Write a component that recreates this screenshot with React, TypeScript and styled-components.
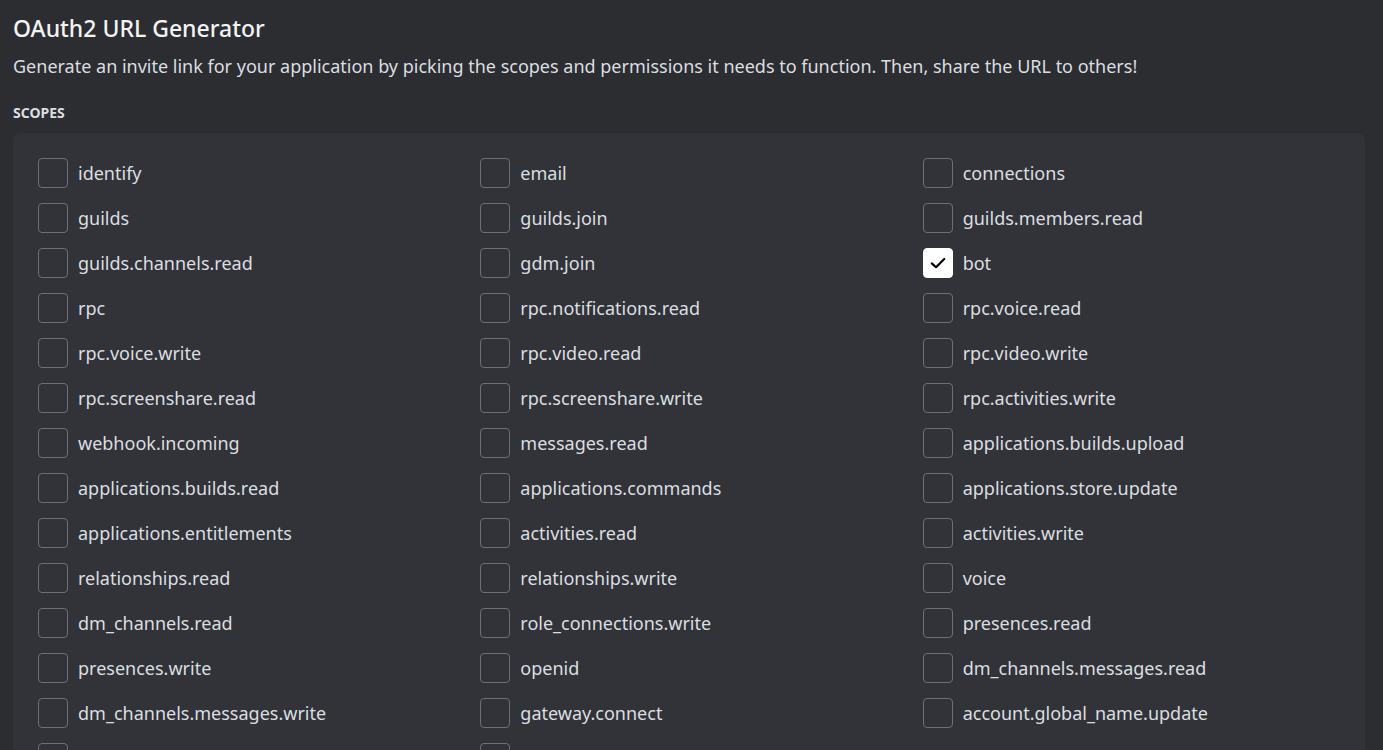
import React from "react";
import styled, { createGlobalStyle } from "styled-components";

const Global = createGlobalStyle`
  html, body { margin: 0; padding: 0; background: #2b2d31; }
  body { font-family: "Noto Sans", "Open Sans", sans-serif; overflow: hidden; }
`;

const Page = styled.div`
  padding: 13px 18px 0 13px;
  height: 750px;
  box-sizing: border-box;
  overflow: hidden;
`;

const Title = styled.h1`
  margin: 0;
  font-size: 23px;
  line-height: 30px;
  font-weight: 500;
  color: #f2f3f5;
`;

const Description = styled.p`
  margin: 10px 0 0;
  font-size: 18px;
  line-height: 26px;
  color: #dbdee1;
`;

const SectionLabel = styled.h2`
  margin: 25px 0 0;
  font-size: 14px;
  line-height: 18px;
  font-weight: 700;
  text-transform: uppercase;
  color: #dbdee1;
`;

const Panel = styled.div`
  margin-top: 11px;
  background: #313338;
  border-radius: 8px;
  padding: 25px 0 25px 25px;
  display: grid;
  grid-template-columns: repeat(3, 1fr);
  row-gap: 15px;
`;

const Item = styled.label`
  display: flex;
  align-items: center;
  gap: 10px;
  height: 30px;
`;

const Box = styled.span<{ $checked?: boolean }>`
  width: 30px;
  height: 30px;
  box-sizing: border-box;
  flex: none;
  border-radius: 4px;
  border: 1px solid ${(p) => (p.$checked ? "#ffffff" : "#6d6f78")};
  background: ${(p) => (p.$checked ? "#ffffff" : "transparent")};
  display: flex;
  align-items: center;
  justify-content: center;
`;

const Label = styled.span`
  font-size: 18px;
  color: #dbdee1;
  white-space: nowrap;
`;

const scopes = [
  "identify", "email", "connections",
  "guilds", "guilds.join", "guilds.members.read",
  "guilds.channels.read", "gdm.join", "bot",
  "rpc", "rpc.notifications.read", "rpc.voice.read",
  "rpc.voice.write", "rpc.video.read", "rpc.video.write",
  "rpc.screenshare.read", "rpc.screenshare.write", "rpc.activities.write",
  "webhook.incoming", "messages.read", "applications.builds.upload",
  "applications.builds.read", "applications.commands", "applications.store.update",
  "applications.entitlements", "activities.read", "activities.write",
  "relationships.read", "relationships.write", "voice",
  "dm_channels.read", "role_connections.write", "presences.read",
  "presences.write", "openid", "dm_channels.messages.read",
  "dm_channels.messages.write", "gateway.connect", "account.global_name.update",
  "payment_sources.country_code", "sdk.social_layer",
];

const Check = () => (
  <svg width="16" height="12" viewBox="0 0 16 12" fill="none">
    <path d="M1.8 6.4l4.2 3.8L14.2 2" stroke="#000" strokeWidth="2.2" strokeLinecap="round" strokeLinejoin="round" />
  </svg>
);

export default function App() {
  return (
    <>
      <Global />
      <Page>
        <Title>OAuth2 URL Generator</Title>
        <Description>
          Generate an invite link for your application by picking the scopes and permissions it needs to function. Then, share the URL to others!
        </Description>
        <SectionLabel>Scopes</SectionLabel>
        <Panel>
          {scopes.map((s) => {
            const checked = s === "bot";
            return (
              <Item key={s}>
                <Box $checked={checked}>{checked && <Check />}</Box>
                <Label>{s}</Label>
              </Item>
            );
          })}
        </Panel>
      </Page>
    </>
  );
}
